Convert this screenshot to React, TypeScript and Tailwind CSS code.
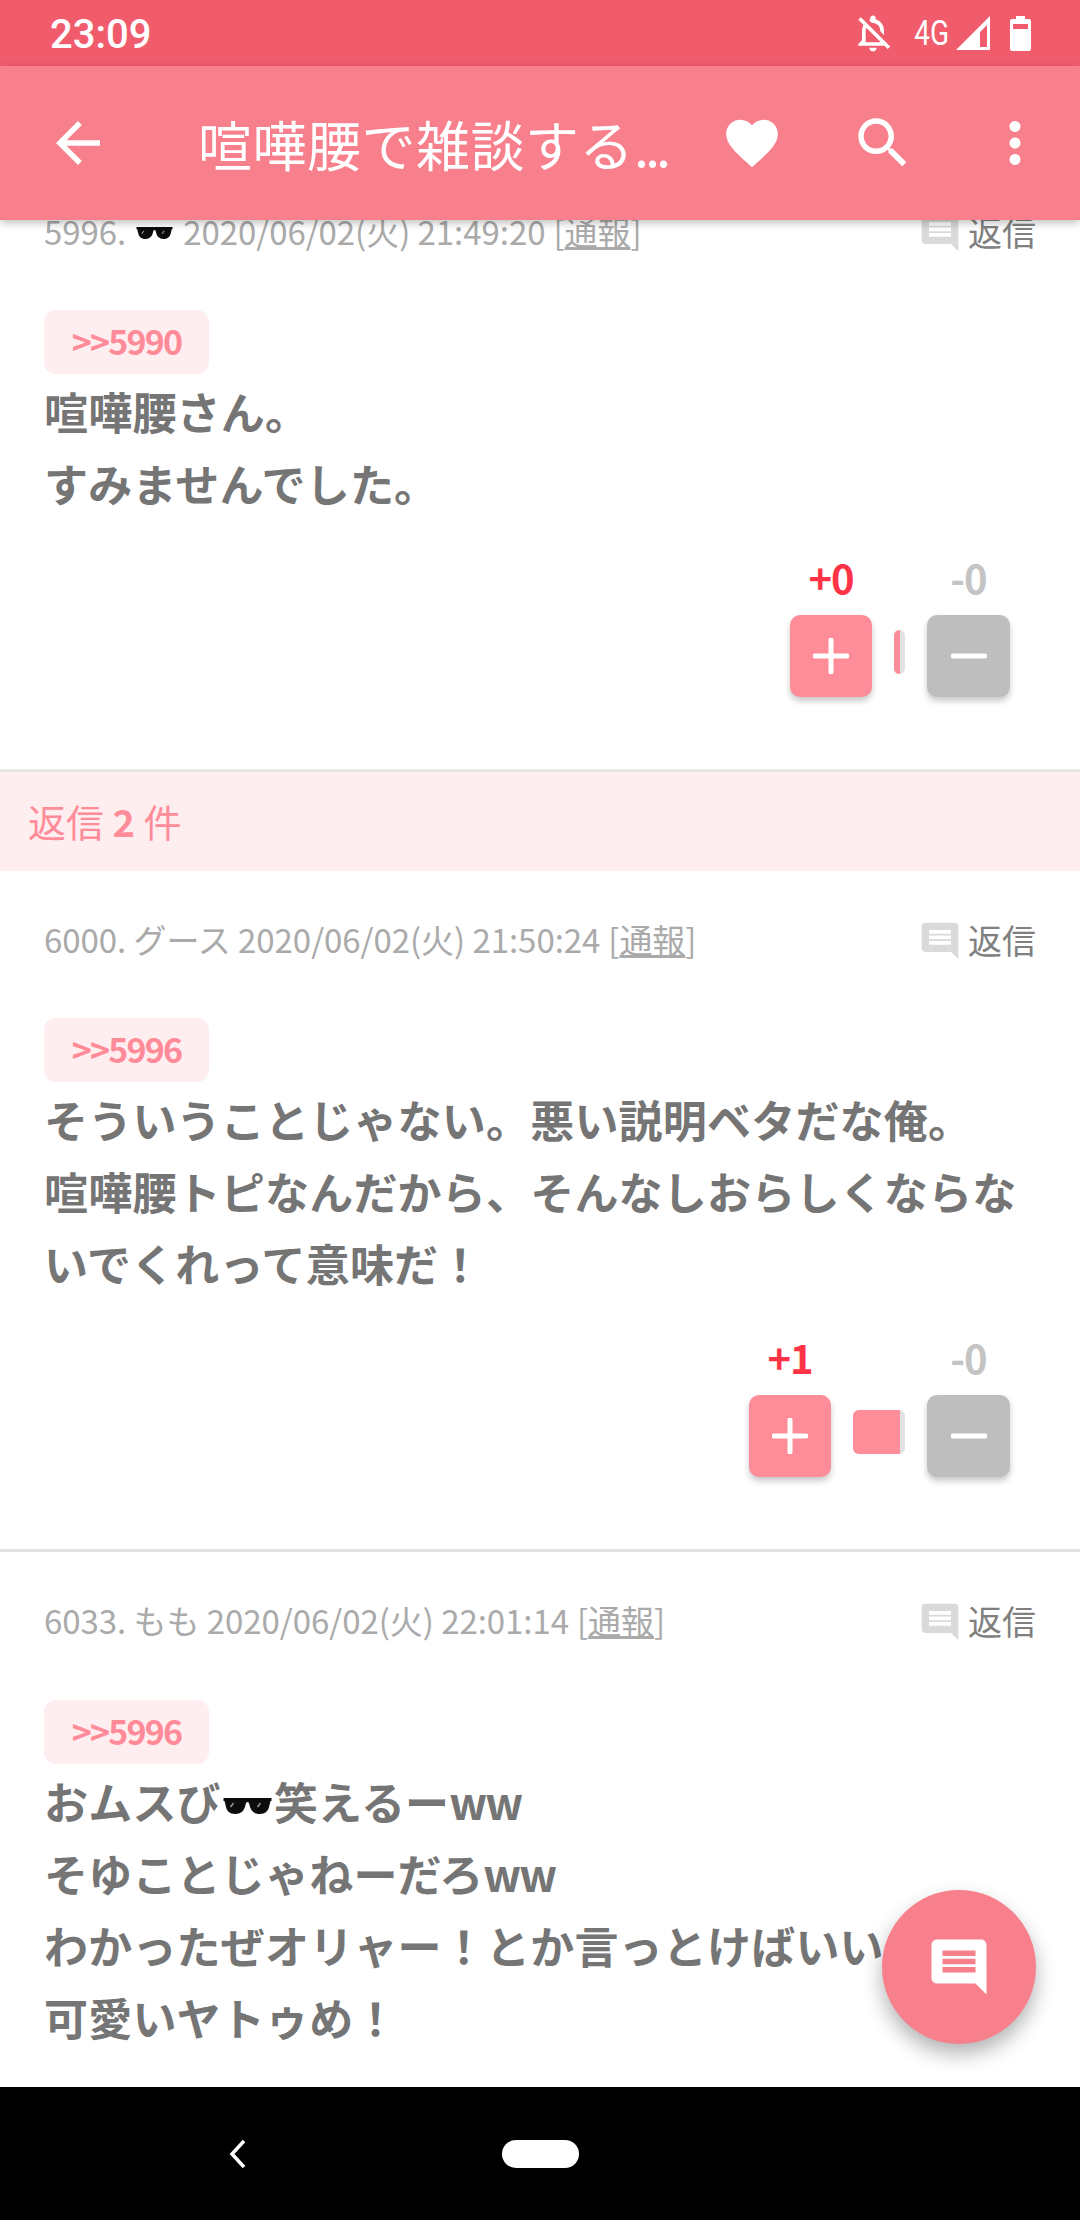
import React from 'react';

const CJK = "font-['Noto_Sans_CJK_JP','Noto_Sans',sans-serif]";

function Sunglasses({ className }: { className: string }) {
  return (
    <svg viewBox="0 0 48 16" className={className}>
      <path d="M0 0h48v3h-1l-1 4c-1 6-4 9-10 9-6 0-9-4-10-9-.3-2-1-3-2-3s-1.700 1-2 3c-1 5-4 9-10 9-6 0-9-3-10-9L1 3H0z" fill="#0c0c0c" />
      <path d="M7 9l3-4M34 9l3-4" stroke="#999" strokeWidth="1.500" fill="none" />
    </svg>
  );
}

function ChatIcon({ className }: { className: string }) {
  return (
    <svg viewBox="0 0 24 24" className={className} fill="currentColor">
      <path d="M21.990 4c0-1.100-.89-2-1.990-2H4c-1.100 0-2 .9-2 2v12c0 1.100.9 2 2 2h14l4 4-.01-18zM18 14H6v-2h12v2zm0-3H6V9h12v2zm0-3H6V6h12v2z" />
    </svg>
  );
}

function PostHeader({ children }: { children: React.ReactNode }) {
  return (
    <div className="flex h-[48px] items-center justify-between">
      <div className="flex items-center whitespace-nowrap text-[33px] tracking-[-0.05px] text-[#aaaaaa]">{children}</div>
      <div className="flex items-center text-[#dadada]">
        <ChatIcon className="mt-[2px] h-[44px] w-[44px]" />
        <span className="-mt-[2px] ml-[6px] text-[34px] text-[#808080]">返信</span>
      </div>
    </div>
  );
}

function Report() {
  return (
    <span className="ml-[8px]">
      [<span className="underline">通報</span>]
    </span>
  );
}

function Anchor({ no }: { no: string }) {
  return (
    <div className="flex h-[64px] w-[165px] items-center justify-center rounded-[12px] bg-[#ffeef0] pb-[4px] text-[34px] font-bold tracking-[-1.800px] text-[#ff8a98]">
      &gt;&gt;{no}
    </div>
  );
}

function Votes({ plus, barClass, fillClass }: { plus: string; barClass: string; fillClass: string }) {
  return (
    <div className="mt-[34px] mr-[26px] flex justify-end">
      <div className="flex flex-col items-center">
        <div className="-mt-[3px] flex h-[50px] items-center text-[40px] font-bold tracking-[-1px] text-[#ff3347]">{plus}</div>
        <div className="mt-[13px] flex h-[82px] w-[82px] items-center justify-center rounded-[10px] bg-[#ff8c99] shadow-[0_4px_6px_rgba(0,0,0,0.22)]">
          <svg viewBox="0 0 36 36" className="h-[36px] w-[36px]">
            <path d="M18 2v32M2 18h32" stroke="#fff" strokeWidth="5" strokeLinecap="round" />
          </svg>
        </div>
      </div>
      <div className={`mx-[22px] mt-[75px] flex h-[44px] overflow-hidden rounded-[6px] bg-[#e2e2e2] ${barClass}`}>
        <div className={`h-full bg-[#ff8c99] ${fillClass}`} />
      </div>
      <div className="flex flex-col items-center">
        <div className="-mt-[3px] flex h-[50px] items-center text-[40px] font-bold tracking-[-1px] text-[#c4c4c4]">-0</div>
        <div className="mt-[13px] flex h-[82px] w-[83px] items-center justify-center rounded-[10px] bg-[#bebebe] shadow-[0_4px_6px_rgba(0,0,0,0.22)]">
          <svg viewBox="0 0 36 36" className="h-[36px] w-[36px]">
            <path d="M2 18h32" stroke="#fff" strokeWidth="5" strokeLinecap="round" />
          </svg>
        </div>
      </div>
    </div>
  );
}

function Body({ children }: { children: React.ReactNode }) {
  return <div className="pt-[1px] pb-[2px] text-[44px] leading-[72px] font-bold tracking-[0.2px] text-[#757575]">{children}</div>;
}

export default function App() {
  return (
    <div className={`relative flex h-[2220px] w-[1080px] flex-col overflow-hidden bg-white ${CJK}`}>
      {/* status bar */}
      <div className="flex h-[66px] shrink-0 items-center bg-[#f15c6d] pr-[49px] pl-[50px] text-white">
        <span className="mt-[4px] font-['Roboto',sans-serif] text-[40px] font-medium">23:09</span>
        <div className="ml-auto flex items-center">
          <svg viewBox="0 0 24 24" className="h-[44px] w-[44px]" fill="currentColor">
            <path d="M12 22c1.100 0 2-.9 2-2h-4c0 1.100.9 2 2 2zm0-15.500c2.490 0 4 2.020 4 4.500v.1l2 2V11c0-3.070-1.630-5.640-4.500-6.320V4c0-.83-.67-1.500-1.500-1.500s-1.500.67-1.500 1.500v.68c-.24.06-.47.15-.69.23l1.640 1.640c.18-.02.36-.05.55-.05zM5.410 3.350L4 4.760l2.810 2.810C6.290 8.570 6 9.740 6 11v5l-2 2v1h14.240l1.740 1.740 1.410-1.410L5.410 3.350zM16 17H8v-6c0-.68.12-1.320.34-1.900L16 16.760V17z" />
          </svg>
          <span className="ml-[15px] inline-block scale-x-[0.8] font-['Roboto',sans-serif] text-[35px] leading-none">4G</span>
          <svg viewBox="0 0 34 34" className="ml-[2px] h-[34px] w-[34px]" fill="currentColor">
            <path fillRule="evenodd" d="M34 0v34H0zM31 9l-7 7v15h7z" />
          </svg>
          <svg viewBox="0 0 21 35" className="ml-[20px] h-[35px] w-[21px]" fill="currentColor">
            <path fillRule="evenodd" d="M6 0h9v3h4a2 2 0 0 1 2 2v28a2 2 0 0 1-2 2H2a2 2 0 0 1-2-2V5a2 2 0 0 1 2-2h4zM3 8v5h15V8z" />
          </svg>
        </div>
      </div>

      {/* app bar */}
      <div className="relative z-10 flex h-[154px] shrink-0 items-center bg-[#f7808c] text-white shadow-[0_3px_8px_rgba(0,0,0,0.25)]">
        <svg viewBox="0 0 24 24" className="ml-[45px] h-[66px] w-[66px]" fill="currentColor">
          <path d="M20 11H7.830l5.590-5.590L12 4l-8 8 8 8 1.410-1.410L7.830 13H20v-2z" />
        </svg>
        <span className="ml-[87px] w-[523px] text-[54px] tracking-[0.5px] whitespace-nowrap">
          喧嘩腰で雑談する<span className="tracking-[-4px]">...</span>
        </span>
        <svg viewBox="0 0 24 24" className="h-[62px] w-[62px]" fill="currentColor">
          <path d="M12 21.350l-1.450-1.320C5.400 15.360 2 12.280 2 8.500 2 5.420 4.420 3 7.500 3c1.740 0 3.410.81 4.500 2.090C13.090 3.810 14.760 3 16.500 3 19.580 3 22 5.420 22 8.500c0 3.780-3.400 6.860-8.550 11.540L12 21.350z" />
        </svg>
        <svg viewBox="0 0 24 24" className="ml-[67px] h-[66px] w-[66px]" fill="currentColor">
          <path d="M15.500 14h-.79l-.28-.27C15.410 12.590 16 11.110 16 9.500 16 5.910 13.090 3 9.500 3S3 5.910 3 9.500 5.910 16 9.500 16c1.610 0 3.090-.59 4.230-1.570l.27.28v.79l5 4.990L20.490 19l-4.990-5zm-6 0C7.010 14 5 11.990 5 9.500S7.010 5 9.500 5 14 7.010 14 9.500 11.990 14 9.500 14z" />
        </svg>
        <svg viewBox="0 0 24 24" className="ml-[66px] h-[66px] w-[66px]" fill="currentColor">
          <path d="M12 8c1.100 0 2-.9 2-2s-.9-2-2-2-2 .9-2 2 .9 2 2 2zm0 2c-1.100 0-2 .9-2 2s.9 2 2 2 2-.9 2-2-.9-2-2-2zm0 6c-1.100 0-2 .9-2 2s.9 2 2 2 2-.9 2-2-.9-2-2-2z" />
        </svg>
      </div>

      {/* thread */}
      <div className="min-h-0 flex-1 overflow-hidden">
        <div className="-mt-[57px]">
          <div className="border-b-[3px] border-[#e6e6e6] px-[44px] pt-[45px] pb-[72px]">
            <PostHeader>
              5996.
              <Sunglasses className="mx-[10px] mt-[2px] h-[12px] w-[37px]" />
              2020/06/02(火) 21:49:20
              <Report />
            </PostHeader>
            <div className="mt-[54px]"><Anchor no="5990" /></div>
            <Body>喧嘩腰さん。<br />すみませんでした。</Body>
            <Votes plus="+0" barClass="w-[11px]" fillClass="w-[6px]" />
          </div>

          <div className="flex h-[99px] items-center bg-[#ffeef0] pb-[2px] pl-[28px] text-[38px] text-[#ff8c99]">
            返信&nbsp;<span className="font-bold">2</span>&nbsp;件
          </div>

          <div className="border-b-[3px] border-[#e2e2e2] px-[44px] pt-[45px] pb-[72px]">
            <PostHeader>
              6000. グース 2020/06/02(火) 21:50:24
              <Report />
            </PostHeader>
            <div className="mt-[54px]"><Anchor no="5996" /></div>
            <Body>
              そういうことじゃない。悪い説明ベタだな俺。<br />
              喧嘩腰トピなんだから、そんなしおらしくならな<br />
              いでくれって意味だ！
            </Body>
            <Votes plus="+1" barClass="w-[52px]" fillClass="w-[47px]" />
          </div>

          <div className="px-[44px] pt-[45px]">
            <PostHeader>
              6033. もも 2020/06/02(火) 22:01:14
              <Report />
            </PostHeader>
            <div className="mt-[55px]"><Anchor no="5996" /></div>
            <Body>
              おムスび<Sunglasses className="mx-[2px] inline h-[16px] w-[49px] -translate-y-[2px]" />笑えるー<span className="tracking-[-2px]">ww</span><br />
              そゆことじゃねーだろ<span className="tracking-[-2px]">ww</span><br />
              わかったぜオリャー！とか言っとけばいいのに<br />
              可愛いヤトゥめ！
            </Body>
          </div>
        </div>
      </div>

      {/* nav bar */}
      <div className="flex h-[133px] shrink-0 items-center bg-black pl-[228px]">
        <svg viewBox="0 0 20 30" className="h-[30px] w-[20px]">
          <path d="M16 2L4 15l12 13" fill="none" stroke="#fff" strokeWidth="3.500" />
        </svg>
        <div className="ml-[254px] h-[28px] w-[77px] rounded-full bg-white" />
      </div>

      {/* compose button */}
      <div className="absolute top-[1890px] left-[882px] z-20 flex h-[154px] w-[154px] items-center justify-center rounded-full bg-[#f7808c] text-white shadow-[0_10px_20px_rgba(0,0,0,0.3)]">
        <ChatIcon className="h-[66px] w-[66px]" />
      </div>
    </div>
  );
}
